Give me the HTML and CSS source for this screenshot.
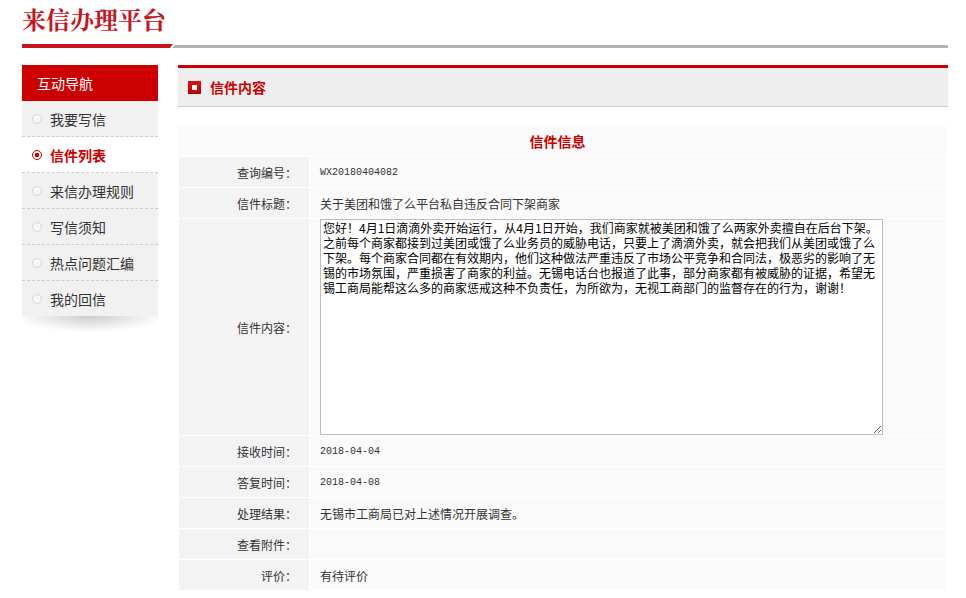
FILE: index.html
```html
<!DOCTYPE html>
<html lang="zh-CN">
<head>
<meta charset="utf-8">
<title>来信办理平台</title>
<link rel="stylesheet" href="styles.css">
</head>
<body>
<div class="page">
  <header class="top">
    <h1 class="logo">来信办理平台</h1>
    <div class="rule"><span class="rule-red"></span><span class="rule-gray"></span></div>
  </header>
  <div class="layout">
    <aside class="side">
      <div class="side-title">互动导航</div>
      <ul class="nav">
        <li class="nav-item"><span class="dot"></span>我要写信</li>
        <li class="nav-item active"><span class="dot"></span>信件列表</li>
        <li class="nav-item"><span class="dot"></span>来信办理规则</li>
        <li class="nav-item"><span class="dot"></span>写信须知</li>
        <li class="nav-item"><span class="dot"></span>热点问题汇编</li>
        <li class="nav-item"><span class="dot"></span>我的回信</li>
      </ul>
    </aside>
    <main class="main">
      <div class="panel-head"><span class="head-icon"></span><span class="head-title">信件内容</span></div>
      <section class="info">
        <div class="info-title">信件信息</div>
        <table class="info-table">
          <tr><td class="label">查询编号：</td><td class="value mono">WX20180404082</td></tr>
          <tr><td class="label">信件标题：</td><td class="value">关于美团和饿了么平台私自违反合同下架商家</td></tr>
          <tr><td class="label">信件内容：</td><td class="value area-cell"><textarea class="content" readonly>您好！4月1日滴滴外卖开始运行，从4月1日开始，我们商家就被美团和饿了么两家外卖擅自在后台下架。
之前每个商家都接到过美团或饿了么业务员的威胁电话，只要上了滴滴外卖，就会把我们从美团或饿了么
下架。每个商家合同都在有效期内，他们这种做法严重违反了市场公平竞争和合同法，极恶劣的影响了无
锡的市场氛围，严重损害了商家的利益。无锡电话台也报道了此事，部分商家都有被威胁的证据，希望无
锡工商局能帮这么多的商家惩戒这种不负责任，为所欲为，无视工商部门的监督存在的行为，谢谢！</textarea></td></tr>
          <tr><td class="label">接收时间：</td><td class="value mono">2018-04-04</td></tr>
          <tr><td class="label">答复时间：</td><td class="value mono">2018-04-08</td></tr>
          <tr><td class="label">处理结果：</td><td class="value">无锡市工商局已对上述情况开展调查。</td></tr>
          <tr><td class="label">查看附件：</td><td class="value"></td></tr>
          <tr><td class="label">评价：</td><td class="value">有待评价</td></tr>
        </table>
      </section>
    </main>
  </div>
</div>
</body>
</html>
```

FILE: styles.css
```css
body {
  margin: 0;
  font-family: "Noto Sans CJK SC", sans-serif;
  font-size: 12px;
  color: #333;
  background: #fff;
}

.page {
  margin: 0 18px 0 22px;
}

.logo {
  margin: 0;
  padding-top: 7px;
  font-family: "Noto Serif CJK SC", "Noto Sans CJK SC", serif;
  font-size: 24px;
  line-height: 24px;
  font-weight: 700;
  color: #c8161d;
}

.rule {
  display: flex;
  align-items: flex-end;
  height: 4px;
  margin-top: 13px;
}

.rule-red {
  width: 151px;
  height: 4px;
  background: #c8161d;
  clip-path: polygon(0 0, 100% 0, calc(100% - 3px) 100%, 0 100%);
}

.rule-gray {
  flex: 1;
  height: 3px;
  margin-left: -1px;
  background: #b3b3b3;
  clip-path: polygon(3px 0, 100% 0, 100% 100%, 0 100%);
}

.layout {
  display: flex;
  gap: 20px;
  margin-top: 17px;
  align-items: flex-start;
}

/* sidebar */
.side {
  width: 136px;
  flex: none;
}

.side::after {
  content: "";
  display: block;
  height: 16px;
  background: radial-gradient(ellipse 55% 100% at 50% 0, rgba(0, 0, 0, 0.2), rgba(0, 0, 0, 0));
}

.side-title {
  height: 36px;
  line-height: 36px;
  padding-left: 15px;
  background: #cc0000;
  color: #fff;
  font-size: 14px;
}

.nav {
  list-style: none;
  margin: 0;
  padding: 0;
}

.nav-item {
  height: 35px;
  display: flex;
  align-items: center;
  gap: 8px;
  padding-left: 10px;
  background: #f1f1f1;
  border-bottom: 1px dashed #cccccc;
  font-size: 14px;
  color: #333;
}

.nav-item:last-child {
  border-bottom: none;
}

.dot {
  width: 10px;
  height: 10px;
  box-sizing: border-box;
  border: 1px solid #d6d6d6;
  border-radius: 50%;
  background: #f6f6f6;
}

.nav-item.active {
  background: #fff;
  color: #cc0000;
  font-weight: 700;
}

.nav-item.active .dot {
  border-color: #cc0000;
  background: radial-gradient(circle, #cc0000 0 2px, #fff 2.6px);
}

/* main */
.main {
  flex: 1;
  min-width: 0;
}

.panel-head {
  height: 38px;
  border-top: 3px solid #cc0000;
  border-bottom: 1px solid #cccccc;
  background: #eeeeee;
  display: flex;
  align-items: center;
  gap: 9px;
  padding-left: 10px;
}

.head-icon {
  width: 13px;
  height: 13px;
  background: linear-gradient(#fff, #fff) center / 5px 5px no-repeat, linear-gradient(#e01010, #c00000);
}

.head-title {
  font-size: 14px;
  font-weight: 700;
  color: #cc0000;
}

.info {
  width: 769px;
  margin-top: 19px;
}

.info-title {
  height: 30px;
  line-height: 30px;
  padding-right: 10px;
  background: #fafafa;
  text-align: center;
  color: #cc0000;
  font-size: 14px;
  font-weight: 700;
}

.info-table {
  width: 100%;
  border-collapse: separate;
  border-spacing: 1px;
  background: #fff;
}

.label {
  width: 118px;
  height: 30px;
  padding: 0 12px 0 0;
  text-align: right;
  background: #f3f3f3;
  color: #333;
}

.value {
  padding: 0 0 0 10px;
  background: #fafafa;
  color: #333;
}

.mono {
  font-family: "Liberation Mono", monospace;
  font-size: 10px;
}

.area-cell {
  padding: 0 0 0 10px;
  vertical-align: top;
}

.content {
  display: block;
  width: 563px;
  height: 216px;
  box-sizing: border-box;
  margin: 0;
  padding: 0 2px 2px;
  border: 1px solid #bdbdbd;
  background: #fff;
  color: #000;
  font-family: "Noto Sans CJK SC", sans-serif;
  font-size: 12px;
  line-height: 15px;
  outline: none;
}
```
